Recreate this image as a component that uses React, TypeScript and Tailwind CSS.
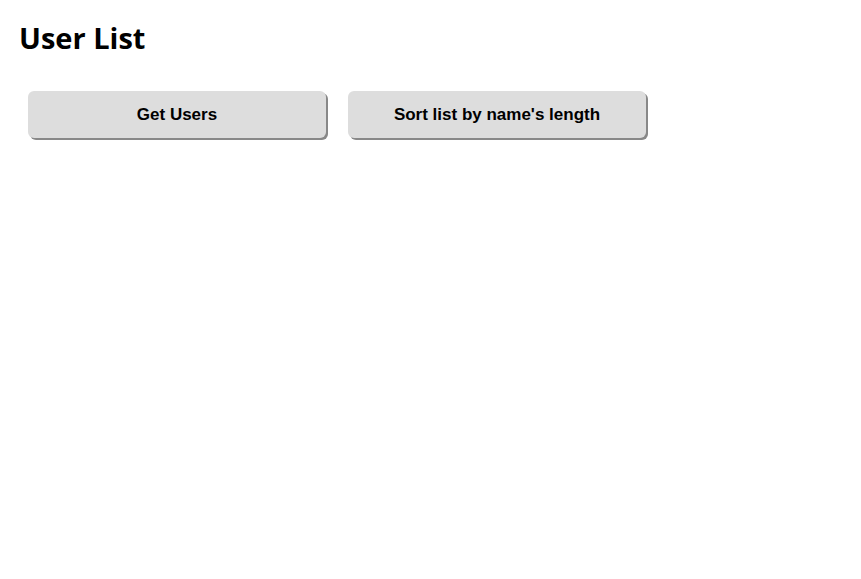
export default function App() {
  return (
    <div className="min-h-[579px] bg-white px-[19px] pt-[18px]">
      <h1 className="font-['Open_Sans',sans-serif] text-[29px] leading-[40px] font-bold text-black">
        User List
      </h1>
      <div className="mt-[33px] ml-[9px] flex gap-[22px]">
        <button className="h-[47px] w-[298px] rounded-[6px] bg-[#dddddd] font-['Liberation_Sans',Arial,sans-serif] text-[17px] font-bold text-black shadow-[2px_2px_0_#888888]">
          Get Users
        </button>
        <button className="h-[47px] w-[298px] rounded-[6px] bg-[#dddddd] font-['Liberation_Sans',Arial,sans-serif] text-[17px] font-bold text-black shadow-[2px_2px_0_#888888]">
          Sort list by name's length
        </button>
      </div>
    </div>
  );
}
